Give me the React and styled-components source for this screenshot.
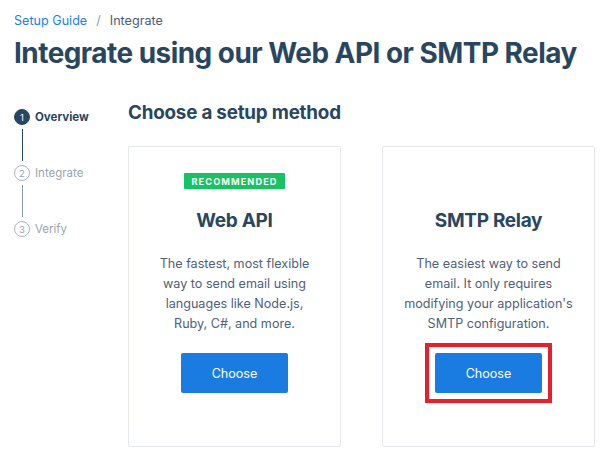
import React from "react";
import styled, { createGlobalStyle } from "styled-components";

const Global = createGlobalStyle`
  html, body { margin: 0; padding: 0; background: #fff; }
  body { font-family: Inter, "Noto Sans", sans-serif; color: #294661; -webkit-font-smoothing: antialiased; }
  * { box-sizing: border-box; }
`;

const Page = styled.div`
  padding: 12px 14px 0 14px;
  width: 610px;
  height: 463px;
  overflow: hidden;
`;

const Breadcrumb = styled.nav`
  display: flex;
  align-items: center;
  gap: 9px;
  font-size: 12.6px;
  line-height: 18px;
  color: #4b5d70;
`;

const Crumb = styled.a`
  color: #1a82e2;
  text-decoration: none;
`;

const Sep = styled.span`
  color: #8d9aa7;
`;

const Title = styled.h1`
  margin: 4px 0 0 0;
  font-size: 27.9px;
  line-height: 38px;
  font-weight: 700;
  letter-spacing: -0.5px;
  color: #294661;
  white-space: nowrap;
`;

const Body = styled.div`
  display: flex;
  margin-top: 29px;
`;

const Steps = styled.ol`
  list-style: none;
  margin: 0;
  padding: 8px 0 0 0;
  width: 114px;
  flex: none;
`;

const Step = styled.li`
  display: flex;
  flex-direction: column;
`;

const StepHead = styled.div`
  display: flex;
  align-items: center;
  gap: 5px;
  height: 16px;
  font-size: 11.5px;
  font-weight: ${(p) => (p.$active ? 700 : 400)};
  color: ${(p) => (p.$active ? "#294661" : "#9aa5b1")};
`;

const Dot = styled.span`
  width: 16px;
  height: 16px;
  border-radius: 50%;
  flex: none;
  display: flex;
  align-items: center;
  justify-content: center;
  font-size: 9.5px;
  font-weight: 400;
  background: ${(p) => (p.$active ? "#294661" : "#fff")};
  color: ${(p) => (p.$active ? "#fff" : "#9aa5b1")};
  border: 1px solid ${(p) => (p.$active ? "#294661" : "#aab4bf")};
`;

const Connector = styled.span`
  display: block;
  width: 1px;
  height: 32px;
  margin: 4px 0 4px 7.5px;
  background: ${(p) => (p.$active ? "#294661" : "#8d9aa7")};
`;

const Main = styled.div`
  flex: 1;
`;

const SectionTitle = styled.h2`
  margin: 0;
  font-size: 18.8px;
  line-height: 24px;
  font-weight: 700;
  color: #294661;
  letter-spacing: -0.2px;
`;

const Cards = styled.div`
  display: grid;
  grid-template-columns: 213px 213px;
  column-gap: 41px;
  margin-top: 21px;
`;

const Card = styled.div`
  border: 1px solid #e4e8eb;
  border-radius: 2px;
  height: 301px;
  display: flex;
  flex-direction: column;
  align-items: center;
  padding-top: 26px;
`;

const Badge = styled.span`
  height: 16px;
  padding: 0 7px;
  display: flex;
  align-items: center;
  background: #18c163;
  color: #fff;
  font-size: 9.2px;
  font-weight: 700;
  letter-spacing: 1.1px;
  border-radius: 1px;
  visibility: ${(p) => (p.$hidden ? "hidden" : "visible")};
`;

const CardTitle = styled.h3`
  margin: 19px 0 0 0;
  font-size: 19px;
  line-height: 26px;
  font-weight: 700;
  color: #294661;
  letter-spacing: -0.3px;
`;

const Desc = styled.p`
  margin: 20px 0 0 0;
  width: 172px;
  text-align: center;
  font-size: 12.6px;
  line-height: 20px;
  color: #4f6176;
`;

const ButtonFrame = styled.div`
  margin-top: 9px;
  padding: 6px;
  border: 4px solid ${(p) => (p.$highlight ? "#e5202b" : "transparent")};
`;

const Button = styled.button`
  display: block;
  width: 107px;
  height: 40px;
  border: none;
  border-radius: 2px;
  background: #1a7be0;
  color: #fff;
  font-family: inherit;
  font-size: 12.6px;
  cursor: pointer;
`;

export default function App() {
  return (
    <>
      <Global />
      <Page>
        <Breadcrumb>
          <Crumb href="#">Setup Guide</Crumb>
          <Sep>/</Sep>
          <span>Integrate</span>
        </Breadcrumb>
        <Title>Integrate using our Web API or SMTP Relay</Title>
        <Body>
          <Steps>
            <Step>
              <StepHead $active>
                <Dot $active>1</Dot>Overview
              </StepHead>
              <Connector $active />
            </Step>
            <Step>
              <StepHead>
                <Dot>2</Dot>Integrate
              </StepHead>
              <Connector />
            </Step>
            <Step>
              <StepHead>
                <Dot>3</Dot>Verify
              </StepHead>
            </Step>
          </Steps>
          <Main>
            <SectionTitle>Choose a setup method</SectionTitle>
            <Cards>
              <Card>
                <Badge>RECOMMENDED</Badge>
                <CardTitle>Web API</CardTitle>
                <Desc>
                  The fastest, most flexible way to send email using languages
                  like Node.js, Ruby, C#, and more.
                </Desc>
                <ButtonFrame>
                  <Button>Choose</Button>
                </ButtonFrame>
              </Card>
              <Card>
                <Badge $hidden>RECOMMENDED</Badge>
                <CardTitle>SMTP Relay</CardTitle>
                <Desc>
                  The easiest way to send email. It only requires modifying your
                  application's SMTP configuration.
                </Desc>
                <ButtonFrame $highlight>
                  <Button>Choose</Button>
                </ButtonFrame>
              </Card>
            </Cards>
          </Main>
        </Body>
      </Page>
    </>
  );
}
